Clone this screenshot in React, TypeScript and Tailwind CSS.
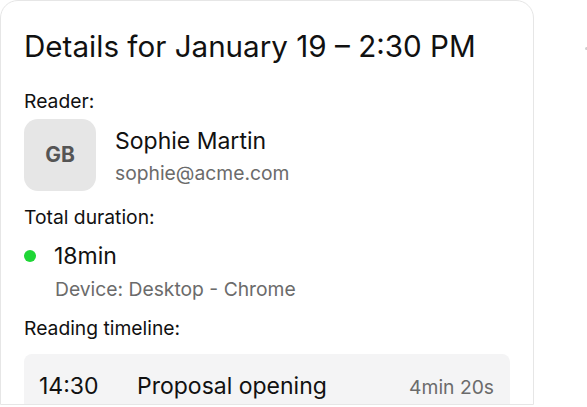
import React from "react";

export default function App() {
  return (
    <div
      className="relative w-[587px] h-[407px] bg-white overflow-hidden"
      style={{ fontFamily: "Inter, 'Noto Sans', sans-serif" }}
    >
      <div className="w-[534px] h-[405px] border border-[#e6e6e6] rounded-t-[18px] overflow-hidden bg-white px-[23px] pt-[27px]">
        <h1 className="text-[29.6px] leading-[36px] text-[#111]">
          Details for January 19 – 2:30 PM
        </h1>
        <div className="mt-[25px] text-[19.3px] leading-[24px] text-[#111]">Reader:</div>
        <div className="mt-[6px] flex items-start gap-[19px]">
          <div className="w-[72px] h-[72px] rounded-[14px] bg-[#e6e6e6] flex items-center justify-center text-[21px] font-bold text-[#555]">
            GB
          </div>
          <div className="flex flex-col mt-[8px]">
            <div className="text-[23px] leading-[28px] text-[#111]">Sophie Martin</div>
            <div className="mt-[6px] text-[19.3px] leading-[24px] text-[#6b6b6b]">sophie@acme.com</div>
          </div>
        </div>
        <div className="mt-[14px] text-[19.3px] leading-[24px] text-[#111]">Total duration:</div>
        <div className="mt-[13px] flex items-center gap-[18px]">
          <div className="w-[12px] h-[12px] rounded-full bg-[#1fd636]" />
          <div className="text-[23px] leading-[28px] text-[#111]">18min</div>
        </div>
        <div className="ml-[31px] mt-[7px] text-[19.3px] leading-[24px] text-[#6b6b6b]">
          Device: Desktop - Chrome
        </div>
        <div className="mt-[15px] text-[19.3px] leading-[24px] text-[#111]">Reading timeline:</div>
        <div className="mt-[14px] rounded-[8px] bg-[#f4f4f5] h-[80px] pl-[15px] pr-[16px] pt-[18px]">
          <div className="flex items-baseline">
            <div className="w-[98px] text-[23px] leading-[28px] text-[#111]">14:30</div>
            <div className="flex-1 text-[23px] leading-[28px] text-[#111]">Proposal opening</div>
            <div className="text-[19.3px] leading-[24px] text-[#6b6b6b]">4min 20s</div>
          </div>
        </div>
      </div>
      <div className="absolute left-[585px] top-[47px] w-[3px] h-[3px] rounded-full bg-[#cfcfcf]" />
    </div>
  );
}
